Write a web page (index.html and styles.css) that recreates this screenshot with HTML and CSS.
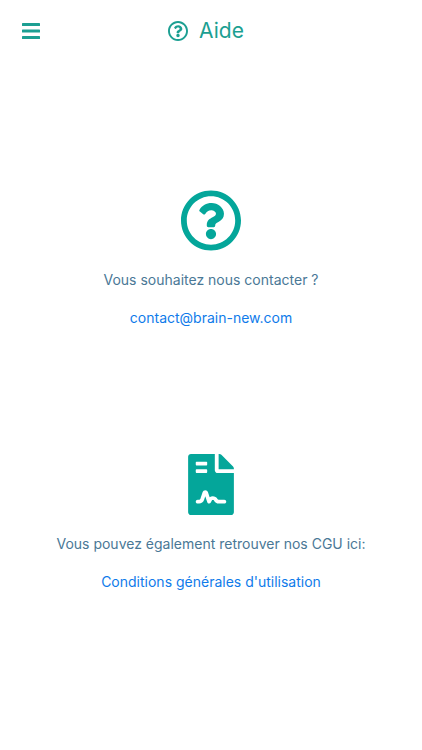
FILE: index.html
```html
<!DOCTYPE html>
<html lang="fr">
<head>
<meta charset="utf-8">
<meta name="viewport" content="width=device-width, initial-scale=1">
<title>Aide</title>
<link rel="stylesheet" href="styles.css">
</head>
<body>
<svg class="symbols" aria-hidden="true">
  <symbol id="question" viewBox="8 8 496 496"><path d="M256 8C119.043 8 8 119.083 8 256c0 136.997 111.043 248 248 248s248-111.003 248-248C504 119.083 392.957 8 256 8zm0 448c-110.532 0-200-89.431-200-200 0-110.495 89.472-200 200-200 110.491 0 200 89.471 200 200 0 110.53-89.431 200-200 200zm107.244-255.2c0 67.052-72.421 68.084-72.421 92.863V300c0 6.627-5.373 12-12 12h-45.647c-6.627 0-12-5.373-12-12v-8.659c0-35.745 27.1-50.034 47.579-61.516 17.561-9.845 28.324-16.541 28.324-29.579 0-17.246-21.999-28.693-39.784-28.693-23.189 0-33.894 10.977-48.942 29.969-4.057 5.12-11.46 6.071-16.666 2.124l-27.824-21.098c-5.107-3.872-6.251-11.066-2.644-16.363C184.846 131.491 214.94 112 261.794 112c49.071 0 101.45 38.304 101.45 88.8zM298 368c0 23.159-18.841 42-42 42s-42-18.841-42-42 18.841-42 42-42 42 18.841 42 42z"/></symbol>
</svg>
<header class="bar">
  <button class="menu" type="button" aria-label="Menu">
    <svg class="menu-icon" viewBox="0 0 18 16" aria-hidden="true"><rect width="18" height="3" rx=".6"/><rect y="6.5" width="18" height="3" rx=".6"/><rect y="13" width="18" height="3" rx=".6"/></svg>
  </button>
  <h1 class="title"><svg class="title-icon" aria-hidden="true"><use href="#question"/></svg>Aide</h1>
</header>
<main class="content">
  <section class="block">
    <svg class="block-icon" aria-hidden="true"><use href="#question"/></svg>
    <p class="text">Vous souhaitez nous contacter ?</p>
    <a class="link" href="mailto:contact@brain-new.com">contact@brain-new.com</a>
  </section>
  <section class="block">
    <svg class="block-icon" viewBox="0 0 384 512" aria-hidden="true"><path d="M224 136V0H24C10.7 0 0 10.7 0 24v464c0 13.3 10.7 24 24 24h336c13.3 0 24-10.7 24-24V160H248c-13.2 0-24-10.8-24-24zM64 72c0-4.42 3.58-8 8-8h80c4.42 0 8 3.58 8 8v16c0 4.42-3.58 8-8 8H72c-4.42 0-8-3.58-8-8V72zm0 64c0-4.42 3.58-8 8-8h80c4.42 0 8 3.58 8 8v16c0 4.42-3.58 8-8 8H72c-4.42 0-8-3.58-8-8v-16zm192.81 248H304c8.84 0 16 7.16 16 16s-7.16 16-16 16h-47.19c-16.45 0-31.27-9.14-38.64-23.86-2.95-5.92-8.09-6.52-10.17-6.52s-7.22.59-10.02 6.19l-7.67 15.34a15.986 15.986 0 0 1-14.31 8.84c-.38 0-.75-.02-1.14-.05-6.45-.45-12-4.75-14.03-10.89L144 354.59l-10.61 31.88c-5.89 17.66-22.38 29.53-41 29.53H80c-8.84 0-16-7.16-16-16s7.16-16 16-16h12.39c4.83 0 9.11-3.08 10.64-7.66l18.19-54.64c3.3-9.81 12.44-16.41 22.78-16.41s19.48 6.59 22.77 16.41l13.88 41.64c19.77-16.19 54.05-9.7 66 14.16 2.02 4.06 5.96 6.5 10.16 6.5zM377 105L279.1 7c-4.5-4.5-10.6-7-17-7H256v128h128v-6.1c0-6.3-2.5-12.4-7-16.9z"/></svg>
    <p class="text">Vous pouvez également retrouver nos CGU ici:</p>
    <a class="link" href="#cgu">Conditions générales d'utilisation</a>
  </section>
</main>
</body>
</html>
```
FILE: styles.css
```css
* {
  box-sizing: border-box;
}

body {
  margin: 0;
  background: #fff;
  font: 14px/20px Inter, "Liberation Sans", sans-serif;
  color: #4a7896;
}

.symbols {
  position: absolute;
  width: 0;
  height: 0;
}

svg {
  display: block;
  fill: #04a69a;
}

.bar {
  display: grid;
  grid-template-columns: 42px 1fr 52px;
  align-items: center;
  padding-top: 16px;
}

.menu {
  padding: 7px 0 7px 22px;
  border: 0;
  background: none;
  cursor: pointer;
}

.menu-icon {
  width: 18px;
  height: 16px;
}

.title {
  display: flex;
  align-items: center;
  justify-content: center;
  gap: 11px;
  margin: 0;
  font-size: 21px;
  font-weight: 400;
  line-height: 30px;
  color: #1c9f92;
}

.title-icon {
  width: 20px;
  height: 20px;
}

.bar svg {
  fill: #1c9f92;
}

.content {
  display: grid;
  gap: 126px;
  padding: 144px 16px;
}

.block {
  display: flex;
  flex-direction: column;
  align-items: center;
  text-align: center;
}

.block-icon {
  width: 60px;
  height: 61px;
}

.text {
  margin: 19px 0 18px;
}

.link {
  color: #0f7bea;
  text-decoration: none;
}
```
